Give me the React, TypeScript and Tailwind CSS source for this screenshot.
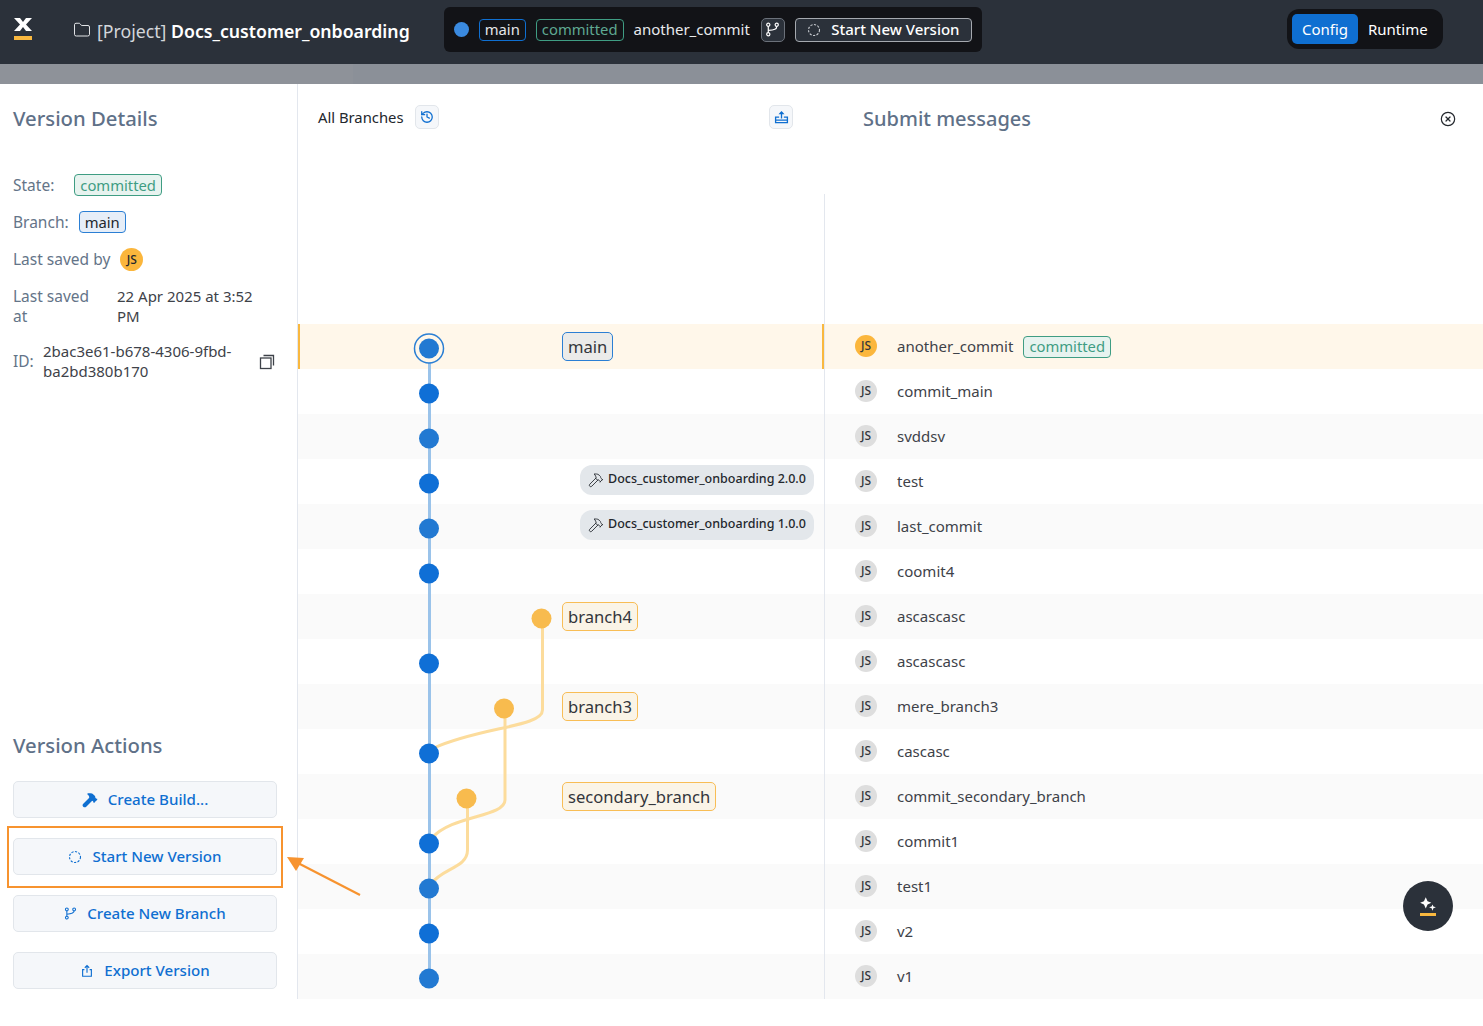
import { CircleX, Folder, Hammer, History } from 'lucide-react'

const FONT = "font-['Noto_Sans',sans-serif]"

type Commit = {
  name: string
  label?: string
  kind?: 'main' | 'branch' | 'build'
}

const COMMITS: Commit[] = [
  { name: 'another_commit', label: 'main', kind: 'main' },
  { name: 'commit_main' },
  { name: 'svddsv' },
  { name: 'test', label: 'Docs_customer_onboarding 2.0.0', kind: 'build' },
  { name: 'last_commit', label: 'Docs_customer_onboarding 1.0.0', kind: 'build' },
  { name: 'coomit4' },
  { name: 'ascascasc', label: 'branch4', kind: 'branch' },
  { name: 'ascascasc' },
  { name: 'mere_branch3', label: 'branch3', kind: 'branch' },
  { name: 'cascasc' },
  { name: 'commit_secondary_branch', label: 'secondary_branch', kind: 'branch' },
  { name: 'commit1' },
  { name: 'test1' },
  { name: 'v2' },
  { name: 'v1' },
]

function DashedCircle({ className }: { className?: string }) {
  return (
    <svg viewBox="0 0 14 14" className={className} fill="none" stroke="currentColor" strokeWidth="1.1">
      <circle cx="7" cy="7" r="5.5" strokeDasharray="2.2 1.4" />
    </svg>
  )
}

function BranchIcon({ className }: { className?: string }) {
  return (
    <svg viewBox="0 0 16 16" className={className} fill="none" stroke="currentColor" strokeWidth="1.3">
      <circle cx="3.5" cy="3" r="1.7" />
      <circle cx="3.5" cy="13" r="1.7" />
      <circle cx="12.5" cy="3" r="1.7" />
      <path d="M3.5 4.7v6.6M12.5 4.7c0 3-2.5 3.8-9 4.3" />
    </svg>
  )
}

function ShareIcon({ className }: { className?: string }) {
  return (
    <svg viewBox="0 0 16 16" className={className} fill="none" stroke="currentColor" strokeWidth="1.3">
      <path d="M5 6.5H3v7.5h10V6.5h-2M8 10V2M5.5 4.3 8 1.8l2.5 2.5" />
    </svg>
  )
}

function OutboxIcon({ className }: { className?: string }) {
  return (
    <svg viewBox="0 0 16 16" className={className} fill="none" stroke="currentColor" strokeWidth="1.4">
      <path d="M5.5 7.5H1.7v6h12.6v-6h-3.8M1.7 10.8h12.6M8 9V2.2" />
      <path d="M8 1 4.8 4.6h6.4z" fill="currentColor" stroke="none" />
    </svg>
  )
}

function Badge({ children, className }: { children: string; className: string }) {
  return (
    <span className={`inline-flex h-[22px] items-center rounded-[4px] border px-[5px] text-[14.8px] leading-none ${className}`}>
      {children}
    </span>
  )
}

function ActionButton({ icon, children }: { icon: React.ReactNode; children: string }) {
  return (
    <button className="flex h-[37px] w-full items-center justify-center gap-[10px] rounded-[5px] border border-[#e2e6eb] bg-[#f5f7fa] text-[15.1px] font-medium text-[#0f6fd1]">
      {icon}
      {children}
    </button>
  )
}

function GraphCell({ commit, index }: { commit: Commit; index: number }) {
  const active = index === 0
  return (
    <div className={`flex h-[45px] w-[526px] shrink-0 items-center ${active ? 'border-x-2 border-x-[#f9b83f]' : ''}`}>
      {commit.kind === 'main' && (
        <span className="ml-[262px] rounded-[5px] border border-[#2b7fd4] bg-[#ebebe9] px-[5px] py-[2px] text-[16.6px] leading-[23px] text-[#33363b]">
          {commit.label}
        </span>
      )}
      {commit.kind === 'branch' && (
        <span className="ml-[264px] rounded-[5px] border border-[#f8bd55] bg-[#faf4e7] px-[5px] py-[2px] text-[16.6px] leading-[23px] text-[#33363b]">
          {commit.label}
        </span>
      )}
      {commit.kind === 'build' && (
        <span className="ml-[282px] flex h-[30px] w-[234px] -translate-y-[2px] items-center gap-[4px] rounded-xl bg-[#e3e7eb] pl-2 text-[12.5px] font-medium text-[#23272d]">
          <Hammer className="h-4 w-4" strokeWidth={1.3} />
          {commit.label}
        </span>
      )}
    </div>
  )
}

function MessageCell({ commit, index }: { commit: Commit; index: number }) {
  const active = index === 0
  return (
    <div className="flex h-[45px] flex-1 items-center border-l border-[#e3e7ee] pl-[30px]">
      <span className={`flex h-[22px] w-[22px] -translate-y-px items-center justify-center rounded-full text-[12px] font-medium text-[#33363b] ${active ? 'bg-[#fbb63c]' : 'bg-[#dedede]'}`}>
        JS
      </span>
      <span className="ml-[20px] text-[15px] text-[#3e4249]">{commit.name}</span>
      {active && (
        <Badge className="ml-[10px] border-[#3f9d83] bg-[#e7f3ef] text-[#3f9d83]">committed</Badge>
      )}
    </div>
  )
}

function BranchGraph() {
  // rows on a striped background show a paler dot
  const mainRows = [0, 1, 2, 3, 4, 5, 7, 9, 11, 12, 13, 14]
  return (
    <svg className="pointer-events-none absolute left-0 top-0" width="526" height="675">
      <g transform="translate(-298 -324)" fill="none">
        <path d="M429.5 348V978" stroke="#9ac3ea" strokeWidth="3" />
        <g stroke="#fcdc9c" strokeWidth="3">
          <path d="M542.5 618V710C542.5 727 480 727 434 748" />
          <path d="M505 708V800C505 817 452 815 432 838" />
          <path d="M467.5 798V850C467.5 868 442 868 431 884" />
        </g>
        <circle cx="429" cy="348.5" r="14.5" fill="#fff7ea" stroke="#2b7fd4" strokeWidth="1.5" />
        {mainRows.map((row) => (
          <circle key={row} cx="429" cy={348.5 + row * 45} r="10" fill={row % 2 === 0 ? '#2279d2' : '#0f6fd6'} />
        ))}
        <circle cx="541.5" cy="618.5" r="10" fill="#f8bb4e" />
        <circle cx="504" cy="708.5" r="10" fill="#f8bb4e" />
        <circle cx="466.5" cy="798.5" r="10" fill="#f8bb4e" />
      </g>
    </svg>
  )
}

export default function App() {
  return (
    <div className={`relative min-h-[1026px] bg-white ${FONT}`}>
      {/* Top bar */}
      <header className="flex h-16 items-start bg-[#2b313a] pr-[40px] text-white">
        <div className="ml-[14px] mt-[17px] flex w-[18px] flex-col items-center">
          <svg viewBox="0 0 18 13" className="h-[15px] w-[18px]">
            <path d="M0 0h6l3 4 3-4h6l-6 6.5 6 6.5h-6l-3-4-3 4H0l6-6.5z" fill="#fff" />
          </svg>
          <span className="mt-[4px] h-1 w-[18px] bg-[#f9b83f]" />
        </div>
        <Folder className="ml-[41px] mt-[21px] h-[18px] w-[18px] text-[#e6e8eb]" strokeWidth={1.3} />
        <h1 className="ml-[6px] mt-[19px] text-[17.7px] leading-[25px] text-[#d3d6da]">
          [Project] <span className="font-semibold text-white">Docs_customer_onboarding</span>
        </h1>
        <div className="ml-[34px] mt-[7px] flex h-[45px] w-[538px] items-center rounded-md bg-[#121317] pl-[10px]">
          <span className="h-[15px] w-[15px] rounded-full bg-[#3a8ae0]" />
          <Badge className="ml-[10px] border-[#0f6fd1] text-[#e4e6e9]">main</Badge>
          <Badge className="ml-[10px] border-[#3f9d83] text-[#5fa892]">committed</Badge>
          <span className="ml-[10px] text-[15px] text-[#e8eaec]">another_commit</span>
          <button className="ml-[11px] flex h-[24px] w-[24px] items-center justify-center rounded-[5px] border border-[#6b717a] bg-[#2b313a]">
            <BranchIcon className="h-[15px] w-[15px]" />
          </button>
          <button className="ml-[10px] flex h-[24px] w-[177px] items-center justify-center gap-[10px] rounded-[4px] border border-[#a5a9af] bg-[#2b313a] text-[15px] font-medium">
            <DashedCircle className="h-[14px] w-[14px] text-[#c8cbd0]" />
            Start New Version
          </button>
        </div>
        <div className="ml-auto mt-[9px] flex h-10 w-[156px] items-center rounded-xl bg-[#121317] pl-[5px] text-[15px]">
          <span className="flex h-[30px] w-[66px] items-center justify-center rounded-[5px] bg-[#0f6fd1]">Config</span>
          <span className="ml-[10px]">Runtime</span>
        </div>
      </header>

      {/* Panel, gray strip shows behind its corner */}
      <div className="bg-[linear-gradient(#8b9098_20px,#ffffff_20px)]">
        <div className="h-5 w-[353px] bg-[#8e9299]" />
        <main className="flex h-[915px] rounded-tr-xl bg-white">
          <aside className="flex w-[298px] shrink-0 flex-col border-r border-[#e3e7ee] pb-[10px] pl-[13px] pr-5">
            <h2 className="mt-5 text-[20.3px] font-medium leading-7 text-[#5f7188]">Version Details</h2>
            <div className="mt-[42px] flex h-[22px] items-center text-[15.5px] text-[#647488]">
              <span className="translate-y-px">State:</span>
              <Badge className="ml-5 border-[#3f9d83] bg-[#e7f3ef] text-[#3f9d83]">committed</Badge>
            </div>
            <div className="mt-[15px] flex h-[22px] items-center text-[15.5px] text-[#647488]">
              <span className="translate-y-px">Branch:</span>
              <Badge className="ml-[10px] border-[#2b7fd4] bg-[#e6eef8] text-[#23272d]">main</Badge>
            </div>
            <div className="mt-[15px] flex h-[23px] items-center text-[15.5px] text-[#647488]">
              Last saved by
              <span className="ml-[10px] flex h-[23px] w-[23px] items-center justify-center rounded-full bg-[#fbb63c] text-[12px] font-medium text-[#23272d]">
                JS
              </span>
            </div>
            <div className="mt-[15px] flex text-[15px] leading-5">
              <span className="w-[104px] shrink-0 pr-[14px] text-[15.5px] text-[#647488]">Last saved at</span>
              <span className="text-[#3e4249]">22 Apr 2025 at 3:52 PM</span>
            </div>
            <div className="mt-[15px] flex items-center text-[15px] leading-5">
              <span className="w-[30px] shrink-0 text-[15.5px] text-[#647488]">ID:</span>
              <span className="w-[200px] text-[#3e4249]">2bac3e61-b678-4306-9fbd-ba2bd380b170</span>
              <svg viewBox="0 0 16 16" className="ml-[16px] h-4 w-4 translate-y-px text-[#3e4249]" fill="none" stroke="currentColor" strokeWidth="1.3">
                <rect x="1.5" y="4" width="10.5" height="10.5" />
                <path d="M4.5 1.5h10v10" />
              </svg>
            </div>

            <h2 className="mt-auto text-[20.3px] font-medium leading-7 text-[#5f7188]">Version Actions</h2>
            <div className="mt-[22px] flex w-[264px] flex-col gap-5">
              <ActionButton icon={<Hammer className="h-4 w-4" fill="currentColor" strokeWidth={2} />}>Create Build...</ActionButton>
              <ActionButton icon={<DashedCircle className="h-[14px] w-[14px]" />}>Start New Version</ActionButton>
              <ActionButton icon={<BranchIcon className="h-[13px] w-[13px]" />}>Create New Branch</ActionButton>
              <ActionButton icon={<ShareIcon className="h-[14px] w-[14px]" />}>Export Version</ActionButton>
            </div>
          </aside>

          <section className="flex min-w-0 flex-1 flex-col">
            <div className="flex h-[110px] pt-[21px]">
              <div className="flex h-6 w-[526px] shrink-0 items-center pl-5 pr-[31px]">
                <span className="text-[14.8px] text-[#23272d]">All Branches</span>
                <button className="ml-[11px] flex h-6 w-6 items-center justify-center rounded-[5px] border border-[#e2e6eb] bg-[#f5f7fa] text-[#0f6fd1]">
                  <History className="h-[14px] w-[14px]" strokeWidth={2.2} />
                </button>
                <button className="ml-auto flex h-6 w-6 items-center justify-center rounded-[5px] border border-[#e2e6eb] bg-[#f5f7fa] text-[#0f6fd1]">
                  <OutboxIcon className="h-[15px] w-[15px]" />
                </button>
              </div>
              <div className="flex h-7 flex-1 items-center pl-[39px] pr-[27px]">
                <h2 className="text-[20px] font-medium text-[#5f7188]">Submit messages</h2>
                <CircleX className="ml-auto h-4 w-4 text-[#23272d]" strokeWidth={1.8} />
              </div>
            </div>
            <div className="ml-[526px] h-[130px] border-l border-[#e3e7ee]" />
            <div className="relative">
              {COMMITS.map((commit, i) => (
                <div
                  key={`${commit.name}-${i}`}
                  className={`flex ${i === 0 ? 'bg-[#fff7ea]' : i % 2 === 0 ? 'bg-[#fafafa]' : 'bg-white'}`}
                >
                  <GraphCell commit={commit} index={i} />
                  <MessageCell commit={commit} index={i} />
                </div>
              ))}
              <BranchGraph />
            </div>
          </section>
        </main>
      </div>

      {/* Callout over the Start New Version button */}
      <div className="absolute left-[7px] top-[826px] h-[62px] w-[276px] border-2 border-[#f7932f]" />
      <svg className="absolute left-[284px] top-[852px]" width="80" height="48" fill="none">
        <path d="M76 43 12 10" stroke="#f7932f" strokeWidth="2.2" />
        <path d="M3 5 20 6 12 19z" fill="#f7932f" />
      </svg>

      <button className="absolute left-[1403px] top-[881px] flex h-[50px] w-[50px] flex-col items-center justify-center rounded-full bg-[#2b313a]">
        <svg viewBox="0 0 16 13" className="h-[15px] w-[18px]" fill="#fff">
          <path d="M6 0 7.6 3.6 11 5 7.6 6.5 6 10 4.4 6.5 1 5 4.4 3.6z" />
          <path d="M12 6.5 12.8 8.3 15 9 12.8 9.8 12 12 11.2 9.8 9 9 11.2 8.3z" />
        </svg>
        <span className="mt-[1px] h-[3px] w-4 bg-[#f9b83f]" />
      </button>
    </div>
  )
}
